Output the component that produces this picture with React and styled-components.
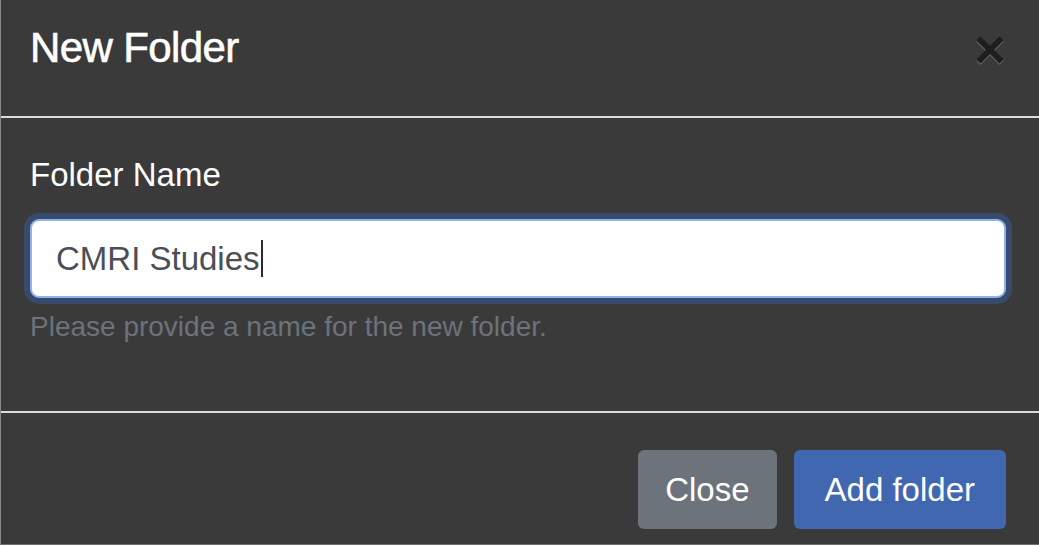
import React from 'react';
import styled, { createGlobalStyle } from 'styled-components';

const GlobalStyle = createGlobalStyle`
	html, body {
		margin: 0;
		padding: 0;
		background: #3a3a3a;
	}
	body {
		font-family: "Liberation Sans", Arial, sans-serif;
	}
`;

const Modal = styled.div`
	width: 1039px;
	height: 545px;
	box-sizing: border-box;
	display: flex;
	flex-direction: column;
	background: #3a3a3a;
	border-left: 1px solid #8a8a8a;
	border-bottom: 1px solid #6e6e6e;
	overflow: hidden;
`;

const Header = styled.div`
	height: 118px;
	box-sizing: border-box;
	padding: 24px 34px 0 29px;
	display: flex;
	align-items: flex-start;
	justify-content: space-between;
	border-bottom: 2px solid #dcdcdc;
`;

const Title = styled.h5`
	margin: 0;
	font-size: 42px;
	line-height: 48px;
	font-weight: 400;
	letter-spacing: -0.6px;
	color: #ffffff;
	-webkit-text-stroke: 0.6px #ffffff;
`;

const CloseX = styled.button`
	margin-top: 11px;
	width: 30px;
	height: 30px;
	padding: 0;
	border: 0;
	background: transparent;
	display: flex;
	align-items: center;
	justify-content: center;
	cursor: pointer;
	svg {
		width: 30px;
		height: 30px;
	}
`;

const Body = styled.div`
	flex: 1;
	padding: 37px 33px 0 29px;
	display: flex;
	flex-direction: column;
`;

const Label = styled.label`
	font-size: 33px;
	line-height: 40px;
	color: #ffffff;
`;

const Field = styled.div`
	margin-top: 24px;
	height: 79px;
	box-sizing: border-box;
	border: 2px solid #8fb2e8;
	border-radius: 9px;
	background: #ffffff;
	box-shadow: 0 0 0 6px #384b6d;
	padding: 0 24px;
	display: flex;
	align-items: center;
	font-size: 33px;
	color: #494f55;
`;

const Caret = styled.span`
	display: inline-block;
	width: 2px;
	height: 37px;
	margin-left: 1px;
	background: #2a2a2a;
`;

const Help = styled.div`
	margin-top: 12px;
	font-size: 28px;
	line-height: 34px;
	color: #6c737a;
`;

const Footer = styled.div`
	height: 133px;
	box-sizing: border-box;
	border-top: 2px solid #dcdcdc;
	padding: 37px 33px 0 0;
	display: flex;
	justify-content: flex-end;
	align-items: flex-start;
	gap: 17px;
`;

const Button = styled.button`
	height: 79px;
	padding: 0 ${(p) => p.$pad}px;
	border: 0;
	border-radius: 6px;
	background: ${(p) => p.$bg};
	color: #ffffff;
	font-family: "Liberation Sans", Arial, sans-serif;
	font-size: 33px;
	cursor: pointer;
`;

export default function App() {
	return (
		<>
			<GlobalStyle />
			<Modal>
				<Header>
					<Title>New Folder</Title>
					<CloseX aria-label="Close">
						<svg viewBox="0 0 30 30">
							<g strokeLinecap="square" fill="none">
								<path d="M5.5 6.5 L24.5 25.5 M24.5 6.5 L5.5 25.5" stroke="#7a7a7a" strokeWidth="6" />
								<path d="M5.5 5.5 L24.5 24.5 M24.5 5.5 L5.5 24.5" stroke="#1e1e1e" strokeWidth="6" />
							</g>
						</svg>
					</CloseX>
				</Header>
				<Body>
					<Label>Folder Name</Label>
					<Field>
						CMRI Studies
						<Caret />
					</Field>
					<Help>Please provide a name for the new folder.</Help>
				</Body>
				<Footer>
					<Button $bg="#6c737b" $pad={27}>Close</Button>
					<Button $bg="#4167b1" $pad={31}>Add folder</Button>
				</Footer>
			</Modal>
		</>
	);
}
